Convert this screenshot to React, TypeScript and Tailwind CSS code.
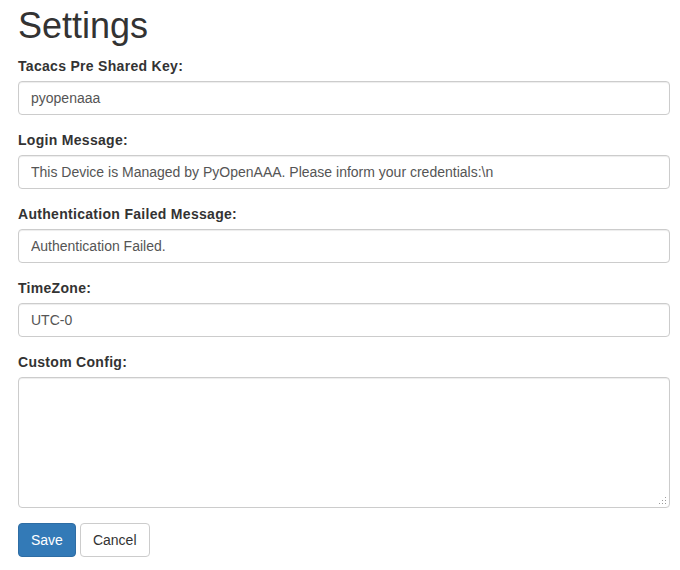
import React from "react";

const inputCls =
  "block w-full h-[34px] px-[12px] py-[6px] text-[14px] leading-[20px] text-[#555] bg-white border border-[#ccc] rounded-[4px] shadow-[inset_0_1px_1px_rgba(0,0,0,0.075)] outline-none";

const labelCls =
  "block mb-[5px] text-[14px] leading-[20px] font-bold text-[#333] tracking-[0.3px]";

export default function App() {
  const fields: [string, string][] = [
    ["Tacacs Pre Shared Key:", "pyopenaaa"],
    ["Login Message:", "This Device is Managed by PyOpenAAA. Please inform your credentials:\\n"],
    ["Authentication Failed Message:", "Authentication Failed."],
    ["TimeZone:", "UTC-0"],
  ];
  return (
    <div
      className="bg-white min-h-[570px] pl-[18px] pr-[10px] text-[#333] text-[14px] leading-[20px]"
      style={{ fontFamily: '"Liberation Sans", Arial, Helvetica, sans-serif' }}
    >
      <h1 className="pt-[6px] mb-[10px] text-[36px] leading-[39.6px] font-normal text-[#333]">
        Settings
      </h1>
      {fields.map(([label, value]) => (
        <div key={label} className="mb-[15px]">
          <label className={labelCls}>{label}</label>
          <input className={inputCls} defaultValue={value} />
        </div>
      ))}
      <div className="mb-[15px]">
        <label className={labelCls}>Custom Config:</label>
        <div className="relative">
          <textarea
            className="block w-full h-[131px] resize-none px-[12px] py-[6px] text-[14px] leading-[20px] text-[#555] bg-white border border-[#ccc] rounded-[4px] shadow-[inset_0_1px_1px_rgba(0,0,0,0.075)] outline-none"
            defaultValue=""
          />
          <svg
            className="absolute right-[3px] bottom-[3px] pointer-events-none"
            width="9"
            height="9"
            viewBox="0 0 9 9"
          >
            <g fill="#9a9a9a">
              <rect x="7" y="1" width="1" height="1" />
              <rect x="4" y="4" width="1" height="1" />
              <rect x="7" y="4" width="1" height="1" />
              <rect x="1" y="7" width="1" height="1" />
              <rect x="4" y="7" width="1" height="1" />
              <rect x="7" y="7" width="1" height="1" />
            </g>
          </svg>
        </div>
      </div>
      <div className="flex gap-[4px]">
        <button className="h-[34px] px-[12px] py-[6px] text-[14px] leading-[20px] text-white bg-[#337ab7] border border-[#2e6da4] rounded-[4px]">
          Save
        </button>
        <button className="h-[34px] px-[12px] py-[6px] text-[14px] leading-[20px] text-[#333] bg-white border border-[#ccc] rounded-[4px]">
          Cancel
        </button>
      </div>
    </div>
  );
}
